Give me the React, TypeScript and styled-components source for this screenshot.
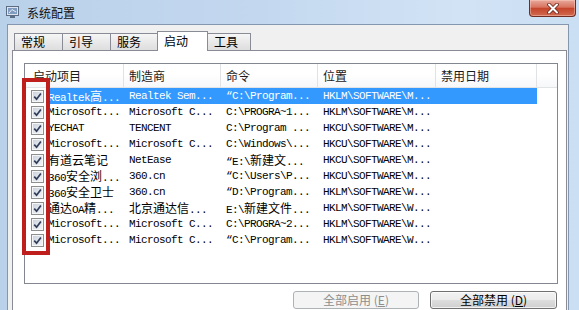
import React from "react";
import styled, { createGlobalStyle } from "styled-components";

const GlobalStyle = createGlobalStyle`
  html, body {
    margin: 0;
    padding: 0;
    overflow: hidden;
  }
  body {
    font-family: "Noto Sans CJK SC", "Noto Sans", sans-serif;
    font-size: 12px;
    color: #000;
  }
`;

// column widths of the startup list (header and rows share them)
const columns = [99, 97, 97, 118, 101];
const CHECK_CELL = 22;

const headers = ["启动项目", "制造商", "命令", "位置", "禁用日期"];

const rows = [
  { name: "Realtek高...", maker: "Realtek Sem...", cmd: "“C:\\Program...", loc: "HKLM\\SOFTWARE\\M...", selected: true },
  { name: "Microsoft...", maker: "Microsoft C...", cmd: "C:\\PROGRA~1...", loc: "HKLM\\SOFTWARE\\M..." },
  { name: "YECHAT", maker: "TENCENT", cmd: "C:\\Program ...", loc: "HKCU\\SOFTWARE\\M..." },
  { name: "Microsoft...", maker: "Microsoft C...", cmd: "C:\\Windows\\...", loc: "HKCU\\SOFTWARE\\M..." },
  { name: "有道云笔记", maker: "NetEase", cmd: "“E:\\新建文...", loc: "HKCU\\SOFTWARE\\M..." },
  { name: "360安全浏...", maker: "360.cn", cmd: "“C:\\Users\\P...", loc: "HKCU\\SOFTWARE\\M..." },
  { name: "360安全卫士", maker: "360.cn", cmd: "“D:\\Program...", loc: "HKLM\\SOFTWARE\\W..." },
  { name: "通达OA精...", maker: "北京通达信...", cmd: "E:\\新建文件...", loc: "HKLM\\SOFTWARE\\W..." },
  { name: "Microsoft...", maker: "Microsoft C...", cmd: "C:\\PROGRA~2...", loc: "HKLM\\SOFTWARE\\W..." },
  { name: "Microsoft...", maker: "Microsoft C...", cmd: "“C:\\Program...", loc: "HKLM\\SOFTWARE\\W..." },
];

const tabs = [
  { label: "常规", width: 49 },
  { label: "引导", width: 49 },
  { label: "服务", width: 48 },
  { label: "启动", width: 51, active: true },
  { label: "工具", width: 44 },
];

const Window = styled.div`
  position: relative;
  width: 579px;
  height: 310px;
  overflow: hidden;
  display: flex;
  flex-direction: column;
  background: linear-gradient(90deg, #bad1ea 0%, #c3d8ef 45%, #d2e3f5 80%, #cadff3 100%);
`;

const TitleBar = styled.div`
  height: 24px;
  flex-shrink: 0;
  display: flex;
  align-items: flex-start;
  padding-left: 6px;
`;

const AppIcon = styled.svg`
  margin-top: 6px;
  flex-shrink: 0;
`;

const Title = styled.span`
  margin-left: 8px;
  line-height: 25px;
  font-size: 12px;
  color: #111;
`;

const CloseButton = styled.div`
  margin-left: auto;
  margin-right: 3px;
  width: 47px;
  height: 17px;
  box-sizing: border-box;
  border: 1px solid #6e2c22;
  border-top: none;
  border-radius: 0 0 4px 4px;
  background: linear-gradient(#e8aa9c 0%, #d8735f 45%, #c4452b 52%, #d06a50 100%);
  box-shadow: inset 0 0 0 1px rgba(255, 210, 200, 0.45);
  display: flex;
  align-items: center;
  justify-content: center;
`;

const Frame = styled.div`
  flex: 1;
  min-height: 0;
  display: flex;
  padding: 0 10px 0 7px;
`;

const Client = styled.div`
  flex: 1;
  display: flex;
  flex-direction: column;
  background: #f0f0f0;
  border: 1px solid #8597af;
  border-bottom: none;
  padding: 6px 1px 0 4px;
`;

const TabStrip = styled.div`
  height: 19px;
  flex-shrink: 0;
  display: flex;
  align-items: flex-end;
  padding-left: 2px;
  position: relative;
  z-index: 1;
`;

const Tab = styled.div<{ $width: number; $active?: boolean }>`
  width: ${(p) => p.$width}px;
  height: ${(p) => (p.$active ? 20 : 17)}px;
  margin-bottom: ${(p) => (p.$active ? -1 : 0)}px;
  margin-right: -1px;
  box-sizing: border-box;
  border: 1px solid #898c95;
  border-bottom: none;
  background: ${(p) => (p.$active ? "#fff" : "linear-gradient(#f6f6f6, #e9e9e9 50%, #dedede 100%)")};
  padding-left: 6px;
  line-height: ${(p) => (p.$active ? 18 : 16)}px;
  font-size: 12px;
  color: #000;
  position: relative;
  z-index: ${(p) => (p.$active ? 2 : 1)};
`;

const Panel = styled.div`
  flex: 1;
  display: flex;
  flex-direction: column;
  background: #fff;
  border: 1px solid #898c95;
  border-bottom: none;
  padding: 12px 8px 0 11px;
`;

const ListBox = styled.div`
  position: relative;
  height: 221px;
  flex-shrink: 0;
  box-sizing: border-box;
  border: 1px solid #828790;
  background: #fff;
`;

const Header = styled.div`
  display: flex;
  height: 24px;
  box-sizing: border-box;
  border-bottom: 1px solid #e2e3e5;
  background: linear-gradient(#ffffff 0%, #ffffff 45%, #f6f7f9 100%);
`;

const HeaderCell = styled.div<{ $width: number; $pad: number }>`
  width: ${(p) => p.$width}px;
  flex: none;
  box-sizing: border-box;
  padding-left: ${(p) => p.$pad}px;
  border-right: 1px solid #e1e2e4;
  line-height: 23px;
  font-size: 12px;
  color: #1a1a1a;
  white-space: nowrap;
`;

const Row = styled.div`
  display: flex;
  height: 16px;
`;

const CheckCell = styled.div`
  width: ${CHECK_CELL}px;
  flex: none;
  display: flex;
  align-items: center;
  padding-left: 6px;
  box-sizing: border-box;
`;

const CheckBox = styled.span`
  width: 13px;
  height: 13px;
  box-sizing: border-box;
  border: 1px solid #8e8f8f;
  box-shadow: inset 0 0 0 1px #f6f6f6;
  background: linear-gradient(135deg, #c9d0da 0%, #e4e8ee 60%, #f3f4f6 100%);
  display: flex;
  align-items: center;
  justify-content: center;
`;

const RowBody = styled.div<{ $selected?: boolean }>`
  display: flex;
  background: ${(p) => (p.$selected ? "#3399ff" : "transparent")};
  color: ${(p) => (p.$selected ? "#fff" : "#000")};
`;

const Cell = styled.div<{ $width: number; $pad: number }>`
  width: ${(p) => p.$width}px;
  flex: none;
  box-sizing: border-box;
  padding-left: ${(p) => p.$pad}px;
  overflow: hidden;
  white-space: nowrap;
  font-family: "Liberation Mono", "DejaVu Sans Mono", monospace;
  font-size: 11px;
  letter-spacing: -0.6px;
  line-height: 16px;
`;

const Han = styled.span`
  font-family: "Noto Sans CJK SC", sans-serif;
  font-size: 12px;
  letter-spacing: 0;
  line-height: 16px;
`;

// annotation drawn over the checkbox column
const Highlight = styled.div`
  position: absolute;
  left: -3px;
  top: 14px;
  width: 28px;
  height: 177px;
  box-sizing: border-box;
  border: 4px solid #be1f1d;
  z-index: 3;
  pointer-events: none;
`;

const ButtonRow = styled.div`
  display: flex;
  justify-content: flex-end;
  gap: 11px;
  margin-top: 7px;
  padding-right: 1px;
`;

const Button = styled.div<{ $width: number; $disabled?: boolean }>`
  width: ${(p) => p.$width}px;
  height: 18px;
  box-sizing: border-box;
  border: 1px solid ${(p) => (p.$disabled ? "#adb2b5" : "#707070")};
  border-radius: 3px;
  background: ${(p) =>
    p.$disabled
      ? "#f4f4f4"
      : "linear-gradient(#f2f2f2 0%, #ebebeb 50%, #dddddd 51%, #cfcfcf 100%)"};
  box-shadow: inset 0 0 0 1px ${(p) => (p.$disabled ? "#f4f4f4" : "rgba(255,255,255,0.7)")};
  color: ${(p) => (p.$disabled ? "#8d8d8d" : "#000")};
  font-size: 12px;
  line-height: 16px;
  text-align: center;
  white-space: nowrap;
`;

function mixed(text: string) {
  return text.split(/([\u3400-\u9fff]+)/).map((part, i) =>
    /[\u3400-\u9fff]/.test(part) ? <Han key={i}>{part}</Han> : part
  );
}

const Tick = () => (
  <svg width="9" height="9" viewBox="0 0 9 9">
    <path d="M1.2 4.6 L3.6 7.2 L7.9 1.4" fill="none" stroke="#2f3e5b" strokeWidth="1.7" />
  </svg>
);

export default function App() {
  return (
    <>
      <GlobalStyle />
      <Window>
        <TitleBar>
          <AppIcon width="13" height="12" viewBox="0 0 13 12">
            <rect x="0.5" y="0.5" width="12" height="9" fill="#dde6f0" stroke="#5b6e86" />
            <rect x="2" y="2" width="9" height="6" fill="#7f9cc0" />
            <path d="M3 7 L6 3.5 L10 6" fill="none" stroke="#e8eef6" strokeWidth="1" />
            <rect x="4" y="10" width="5" height="2" fill="#5b6e86" />
          </AppIcon>
          <Title>系统配置</Title>
          <CloseButton>
            <svg width="14" height="11" viewBox="0 0 14 11">
              <path d="M3 1.5 L11 9.5 M11 1.5 L3 9.5" stroke="#6a2419" strokeWidth="3.6" strokeLinecap="round" />
              <path d="M3 1.5 L11 9.5 M11 1.5 L3 9.5" stroke="#fff" strokeWidth="2" strokeLinecap="round" />
            </svg>
          </CloseButton>
        </TitleBar>
        <Frame>
          <Client>
            <TabStrip>
              {tabs.map((t) => (
                <Tab key={t.label} $width={t.width} $active={t.active}>
                  {t.label}
                </Tab>
              ))}
            </TabStrip>
            <Panel>
              <ListBox>
                <Header>
                  {headers.map((h, i) => (
                    <HeaderCell key={h} $width={columns[i]} $pad={i === 0 ? 8 : 5}>
                      {h}
                    </HeaderCell>
                  ))}
                </Header>
                {rows.map((r, idx) => (
                  <Row key={idx}>
                    <CheckCell>
                      <CheckBox>
                        <Tick />
                      </CheckBox>
                    </CheckCell>
                    <RowBody $selected={r.selected}>
                      <Cell $width={columns[0] - CHECK_CELL} $pad={1}>{mixed(r.name)}</Cell>
                      <Cell $width={columns[1]} $pad={5}>{mixed(r.maker)}</Cell>
                      <Cell $width={columns[2]} $pad={5}>{mixed(r.cmd)}</Cell>
                      <Cell $width={columns[3]} $pad={5}>{mixed(r.loc)}</Cell>
                      <Cell $width={columns[4]} $pad={5} />
                    </RowBody>
                  </Row>
                ))}
                <Highlight />
              </ListBox>
              <ButtonRow>
                <Button $width={126} $disabled>
                  全部启用 (<u>E</u>)
                </Button>
                <Button $width={127}>
                  全部禁用 (<u>D</u>)
                </Button>
              </ButtonRow>
            </Panel>
          </Client>
        </Frame>
      </Window>
    </>
  );
}
